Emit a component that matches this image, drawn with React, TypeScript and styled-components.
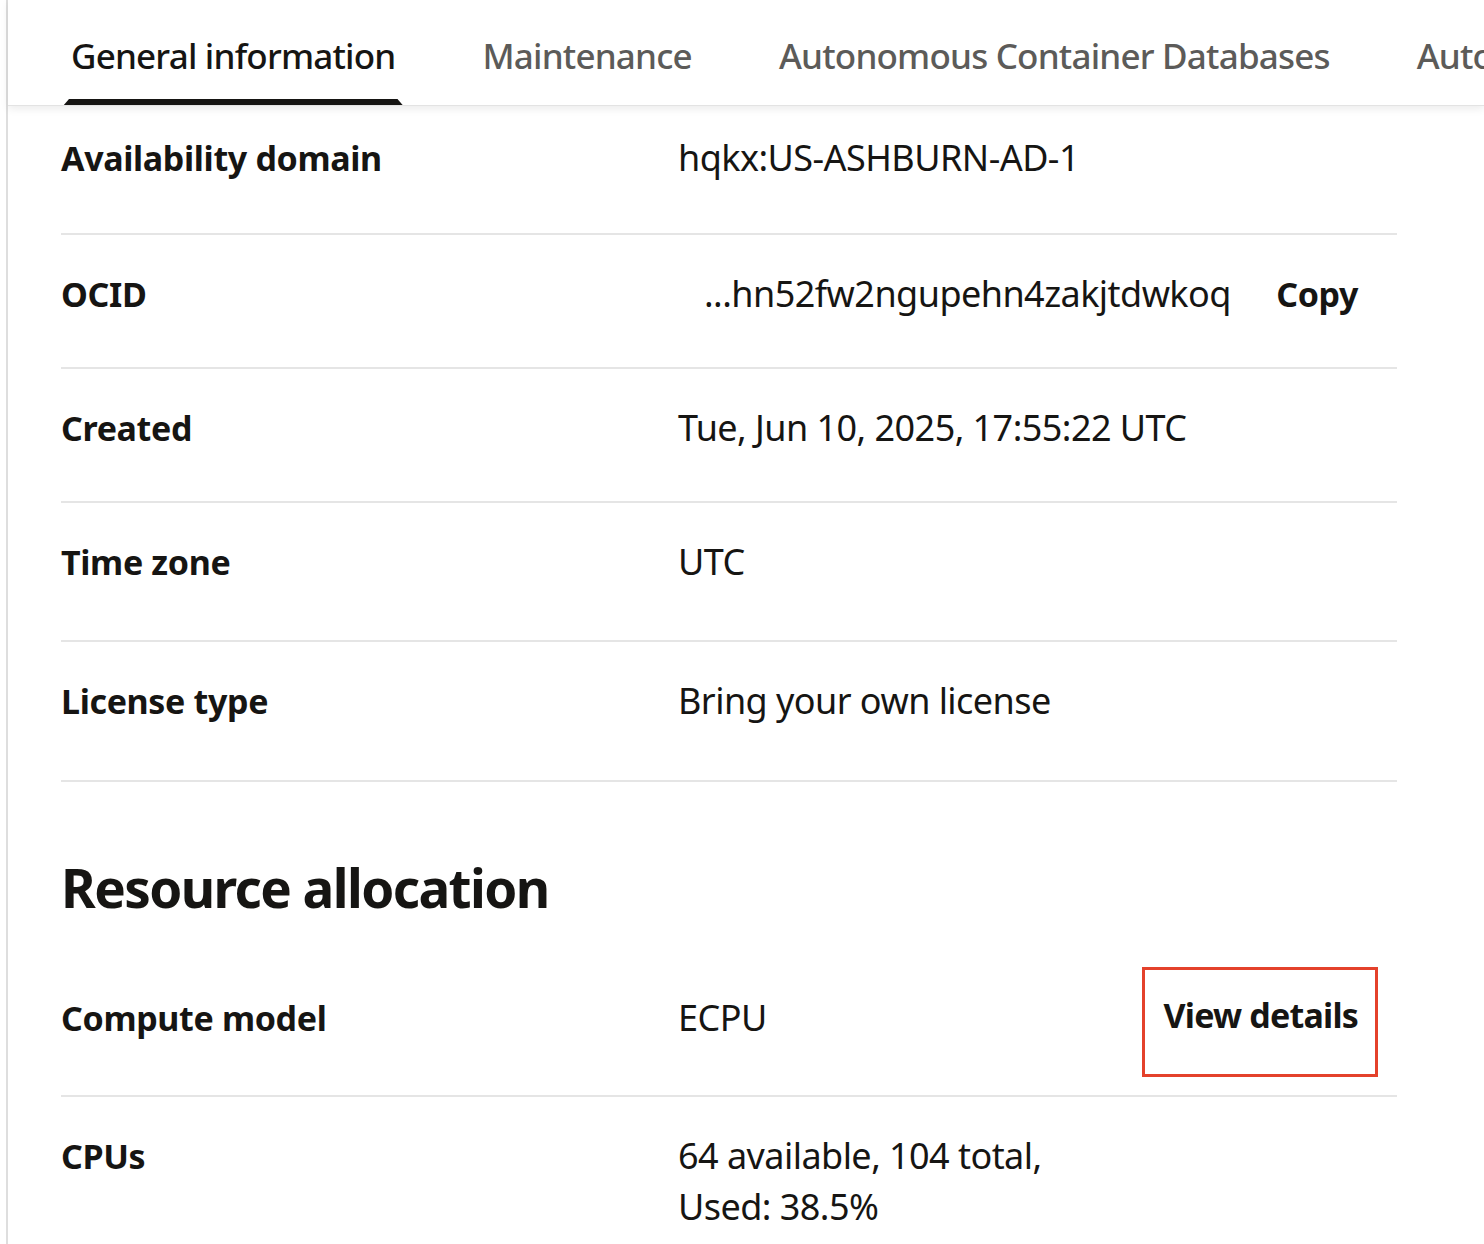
import { FC, ReactNode } from 'react';
import styled, { createGlobalStyle } from 'styled-components';

const GlobalStyle = createGlobalStyle`
  html, body {
    margin: 0;
    padding: 0;
    background: #ffffff;
  }
  body {
    font-family: 'Noto Sans', 'Open Sans', Arial, sans-serif;
    color: #161513;
    overflow: hidden;
  }
`;

const Page = styled.div`
  margin-left: 6px;
  min-height: 1244px;
  border-left: 2px solid #dedede;
  box-sizing: border-box;
`;

const TabBar = styled.nav`
  position: relative;
  z-index: 1;
  display: flex;
  align-items: stretch;
  height: 106px;
  padding-left: 55px;
  border-bottom: 1px solid #e3e3e3;
  box-shadow: 0 3px 8px rgba(0, 0, 0, 0.08);
  box-sizing: border-box;
  white-space: nowrap;
  overflow: hidden;
`;

const Tab = styled.div<{ $active?: boolean }>`
  position: relative;
  display: flex;
  align-items: center;
  padding: 6px 8px 0;
  margin-right: 71px;
  font-size: 35px;
  font-weight: 500;
  letter-spacing: -0.8px;
  color: ${({ $active }) => ($active ? '#161513' : '#5c5b59')};

  &::after {
    content: '';
    display: ${({ $active }) => ($active ? 'block' : 'none')};
    position: absolute;
    left: 0;
    right: 0;
    bottom: -1px;
    height: 7px;
    background: #161513;
    clip-path: polygon(6px 0, calc(100% - 6px) 0, 100% 100%, 0 100%);
  }
`;

const Content = styled.div`
  padding: 0 87px 0 53px;
`;

const Row = styled.div<{ $first?: boolean; $height: number }>`
  display: grid;
  grid-template-columns: 617px 1fr auto;
  align-items: baseline;
  min-height: ${({ $height }) => $height}px;
  padding: ${({ $first }) => ($first ? '26px' : '33px')} 39px 0 0;
  box-sizing: border-box;
  border-bottom: 2px solid #e5e5e5;
`;

const Label = styled.div`
  font-size: 34px;
  line-height: 46px;
  font-weight: 700;
  letter-spacing: -0.35px;
`;

const Value = styled.div<{ $indent?: boolean }>`
  font-size: 36px;
  line-height: 51px;
  font-weight: 400;
  letter-spacing: -0.55px;
  padding-left: ${({ $indent }) => ($indent ? '26px' : '0')};
`;

const Action = styled.button<{ $marked?: boolean }>`
  align-self: ${({ $marked }) => ($marked ? 'start' : 'baseline')};
  font-family: inherit;
  font-size: 34px;
  line-height: 46px;
  font-weight: 700;
  letter-spacing: ${({ $marked }) => ($marked ? '-0.8px' : '-0.4px')};
  color: #161513;
  background: none;
  cursor: pointer;
  border: ${({ $marked }) => ($marked ? '3px solid #e4412b' : 'none')};
  padding: ${({ $marked }) => ($marked ? '22px 17px 36px 18px' : '0')};
  margin: ${({ $marked }) => ($marked ? '-25px -20px 0 0' : '0')};
`;

const SectionTitle = styled.h2`
  margin: 0;
  padding: 69px 0 34px;
  font-size: 53px;
  line-height: 74px;
  font-weight: 700;
  letter-spacing: -1.6px;
`;

type InfoRowProps = {
  label: string;
  height: number;
  first?: boolean;
  action?: ReactNode;
  children: ReactNode;
};

const InfoRow: FC<InfoRowProps> = ({ label, height, first, action, children }) => (
  <Row $first={first} $height={height}>
    <Label>{label}</Label>
    {children}
    {action ?? <span />}
  </Row>
);

const tabs = ['General information', 'Maintenance', 'Autonomous Container Databases', 'Autonomous Databases'];

export default function App() {
  return (
    <>
      <GlobalStyle />
      <Page>
        <TabBar>
          {tabs.map((t, i) => (
            <Tab key={t} $active={i === 0}>
              {t}
            </Tab>
          ))}
        </TabBar>
        <Content>
          <section>
            <InfoRow label="Availability domain" height={129} first>
              <Value>hqkx:US-ASHBURN-AD-1</Value>
            </InfoRow>
            <InfoRow label="OCID" height={134} action={<Action>Copy</Action>}>
              <Value $indent>...hn52fw2ngupehn4zakjtdwkoq</Value>
            </InfoRow>
            <InfoRow label="Created" height={134}>
              <Value>Tue, Jun 10, 2025, 17:55:22 UTC</Value>
            </InfoRow>
            <InfoRow label="Time zone" height={139}>
              <Value>UTC</Value>
            </InfoRow>
            <InfoRow label="License type" height={140}>
              <Value>Bring your own license</Value>
            </InfoRow>
          </section>
          <SectionTitle>Resource allocation</SectionTitle>
          <section>
            <InfoRow label="Compute model" height={138} action={<Action $marked>View details</Action>}>
              <Value>ECPU</Value>
            </InfoRow>
            <InfoRow label="CPUs" height={160}>
              <Value>
                64 available, 104 total,
                <br />
                Used: 38.5%
              </Value>
            </InfoRow>
          </section>
        </Content>
      </Page>
    </>
  );
}
